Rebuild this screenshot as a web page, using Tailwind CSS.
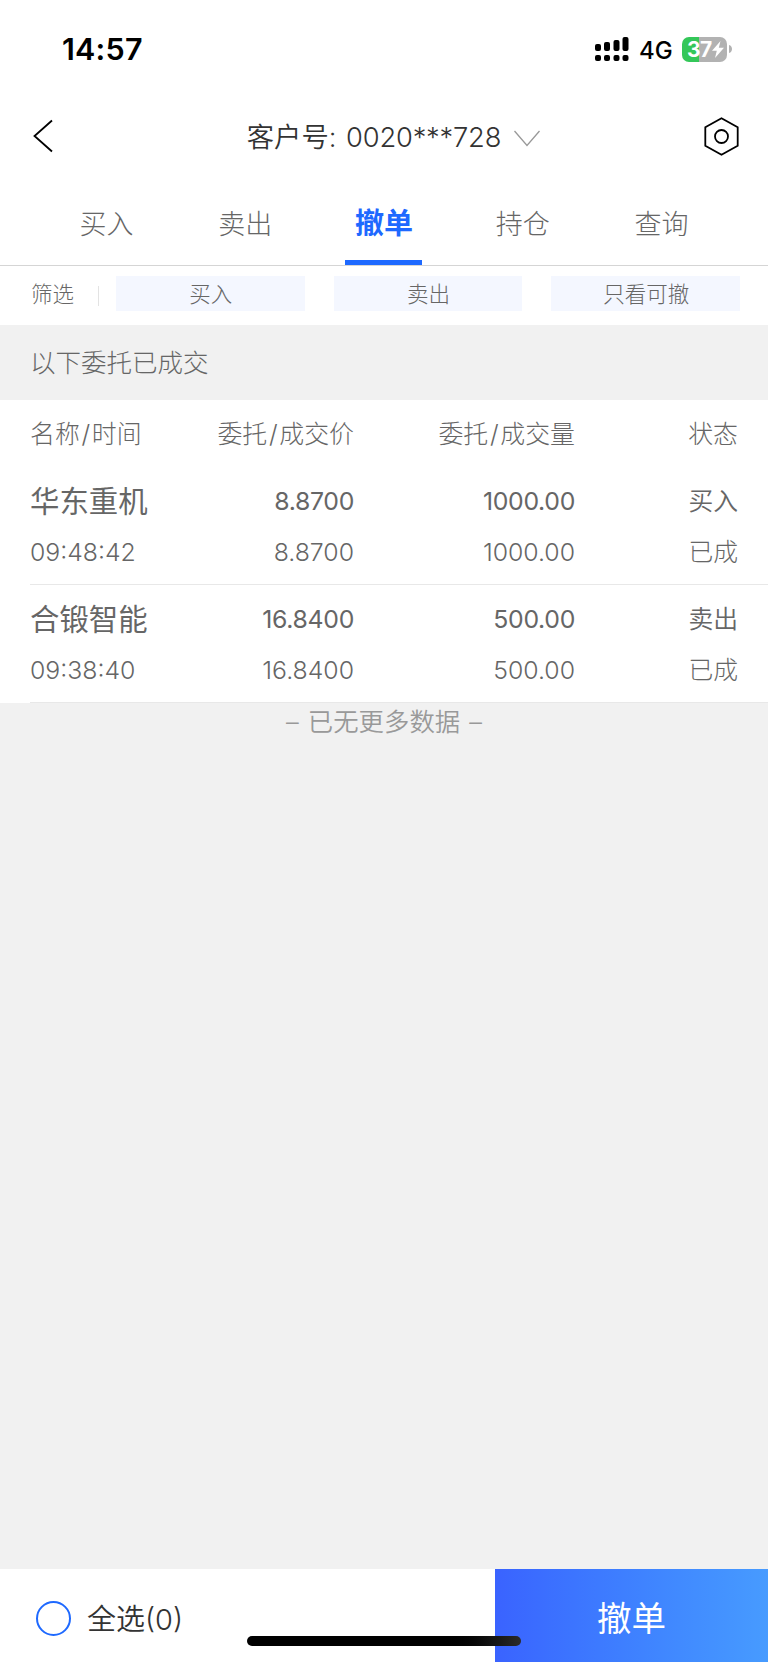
<!DOCTYPE html>
<html lang="zh-CN">
  <head>
    <meta charset="UTF-8" />
    <title>撤单</title>
    <script src="https://cdn.jsdelivr.net/npm/@tailwindcss/browser@4"></script>
  </head>
  <body class="bg-white">
    <div
      class="w-[768px] h-[1663px] flex flex-col bg-white overflow-hidden whitespace-nowrap font-light text-[#666] font-['Inter','Noto_Sans_CJK_SC',sans-serif]"
    >
      <!-- status bar -->
      <div class="h-[98px] flex items-center pl-[62px] pr-[36px] text-black">
        <span class="pt-px text-[30.5px] leading-none font-semibold tracking-[0.2px]">14:57</span>
        <svg class="ml-auto" width="34" height="25" viewBox="0 0 34 25">
          <rect x="0" y="7" width="6" height="7" rx="2" />
          <rect x="9" y="5" width="6" height="9" rx="2" />
          <rect x="18.500" y="3" width="6" height="11" rx="2" />
          <rect x="27.500" y="0" width="6" height="14" rx="2" />
          <rect x="0" y="18" width="6" height="6" rx="2" />
          <rect x="9" y="18" width="6" height="6" rx="2" />
          <rect x="18.500" y="18" width="6" height="6" rx="2" />
          <rect x="27.500" y="18" width="6" height="6" rx="2" />
        </svg>
        <span class="ml-[10px] w-[33px] pt-[3px] text-[24px] leading-none font-medium">4G</span>
        <div
          class="ml-[10px] w-[45px] h-[25px] rounded-[7px] flex items-center bg-linear-to-r from-[#34c759] from-37% to-[#b2b2b2] to-37% text-white"
        >
          <span class="pl-[5px] text-[21px] leading-none font-bold tracking-[-0.5px]">37</span>
          <svg width="12" height="17" viewBox="0 0 12 17" fill="#fff">
            <path d="M8.500 0 0 9.800h4.800L3 17l9-10.200H6.800z" />
          </svg>
        </div>
        <svg class="ml-[2px]" width="3" height="8" viewBox="0 0 3 8" fill="#b2b2b2">
          <path d="M0 0c4 1 4 7 0 8z" />
        </svg>
      </div>

      <!-- header -->
      <div class="h-[77px] flex items-center justify-between pl-[32px] pr-[29px]">
        <svg class="mb-px" width="34" height="34" viewBox="0 0 34 34" fill="none" stroke="#000" stroke-width="1.800">
          <path d="M20 1.500 2.500 17 20 32.500" />
        </svg>
        <div class="flex items-center gap-[13px] ml-[17px] pt-[3px] text-[27.3px] text-[#333] font-[350]">
          <span>客户号: <span class="ml-[2px] tracking-[-0.2px]">0020***728</span></span>
          <svg width="26" height="17" viewBox="0 0 26 17" fill="none" stroke="#999" stroke-width="1.300">
            <path d="M.5 1 13 15.500 25.500 1" />
          </svg>
        </div>
        <svg width="35" height="39" viewBox="0 0 35 39" fill="none" stroke="#000" stroke-width="1.800">
          <path d="M17.500 1.200 33.700 10.300v18.400L17.500 37.800 1.300 28.700V10.300z" />
          <circle cx="17.500" cy="19.500" r="6.500" />
        </svg>
      </div>

      <!-- tabs -->
      <div class="h-[91px] flex px-[37px] border-b border-[#d5d5d5] text-[27px] leading-[97px]">
        <div class="flex-1 text-center pt-px">买入</div>
        <div class="flex-1 text-center pt-px">卖出</div>
        <div class="flex-1 text-center flex flex-col items-center text-[#1e69ff] font-bold text-[29px]">
          <span class="h-[85px]">撤单</span>
          <span class="w-[77px] h-[5px] bg-[#1e69ff]"></span>
        </div>
        <div class="flex-1 text-center pt-px">持仓</div>
        <div class="flex-1 text-center pt-px">查询</div>
      </div>

      <!-- filters -->
      <div class="h-[59px] flex items-start pt-[10px] pl-[31px] pr-[28px] text-[21.5px] leading-[37px]">
        <span class="w-[67px]">筛选</span>
        <span class="w-px h-[20px] mt-[10px] mr-[17px] bg-[#e3e3e3]"></span>
        <div class="flex-1 grid grid-cols-3 gap-[29px] text-center">
          <div class="h-[35px] pl-px bg-[#f4f7ff]">买入</div>
          <div class="h-[35px] pl-px bg-[#f4f7ff]">卖出</div>
          <div class="h-[35px] pl-px bg-[#f4f7ff]">只看可撤</div>
        </div>
      </div>

      <div class="h-[75px] pl-[30px] bg-[#f1f1f1] text-[25.5px] leading-[76px]">以下委托已成交</div>

      <!-- orders -->
      <div class="h-[67px] grid grid-cols-[148px_176px_221px_163px] pl-[30px] text-[24.9px] leading-[69px] text-right">
        <span class="text-left">名称<span class="mx-[1.7px]">/</span>时间</span>
        <span>委托<span class="mx-[1.7px]">/</span>成交价</span>
        <span>委托<span class="mx-[1.7px]">/</span>成交量</span>
        <span>状态</span>
      </div>
      <div class="ml-[30px] h-[118px] pt-[9px] border-b border-[#e8e8e8] grid content-start grid-cols-[148px_176px_221px_163px] text-[24.8px] leading-[51px] text-right">
        <span class="h-[51px] text-left text-[29.4px] font-normal">华东重机</span>
        <span class="h-[51px] font-[370] tracking-[-0.3px]">8.8700</span>
        <span class="h-[51px] font-[370] tracking-[-0.3px]">1000.00</span>
        <span class="h-[51px] font-[350]">买入</span>
        <span class="h-[51px] text-left">09:48:42</span>
        <span class="h-[51px]">8.8700</span>
        <span class="h-[51px]">1000.00</span>
        <span class="h-[51px]">已成</span>
      </div>
      <div class="ml-[30px] h-[118px] pt-[9px] border-b border-[#e8e8e8] grid content-start grid-cols-[148px_176px_221px_163px] text-[24.8px] leading-[51px] text-right">
        <span class="h-[51px] text-left text-[29.4px] font-normal">合锻智能</span>
        <span class="h-[51px] font-[370] tracking-[-0.3px]">16.8400</span>
        <span class="h-[51px] font-[370] tracking-[-0.3px]">500.00</span>
        <span class="h-[51px] font-[350]">卖出</span>
        <span class="h-[51px] text-left">09:38:40</span>
        <span class="h-[51px]">16.8400</span>
        <span class="h-[51px]">500.00</span>
        <span class="h-[51px]">已成</span>
      </div>
      <div class="flex-1 bg-[#f1f1f1] text-center text-[25.4px] leading-[38px] text-[#999] [word-spacing:2px] font-[350]">– 已无更多数据 –</div>

      <!-- bottom bar -->
      <div class="relative h-[94px] flex pb-px">
        <div class="w-[495px] flex items-center pl-[36px] pt-[6px] text-[29px] text-[#333] font-[350]">
          <span class="size-[35px] rounded-full border-2 border-[#1e69ff] mr-[16px]"></span>
          <span class="pt-[2px]">全选(0)</span>
        </div>
        <div class="flex-1 pt-[3px] bg-linear-to-r from-[#3a63ff] to-[#479bff] text-center text-[34.5px] leading-[93px] font-normal text-white">撤单</div>
        <div class="absolute left-[247px] top-[67px] w-[274px] h-[10px] rounded-full bg-linear-to-r from-black from-70% to-[#2b2b2b]"></div>
      </div>
    </div>
  </body>
</html>
